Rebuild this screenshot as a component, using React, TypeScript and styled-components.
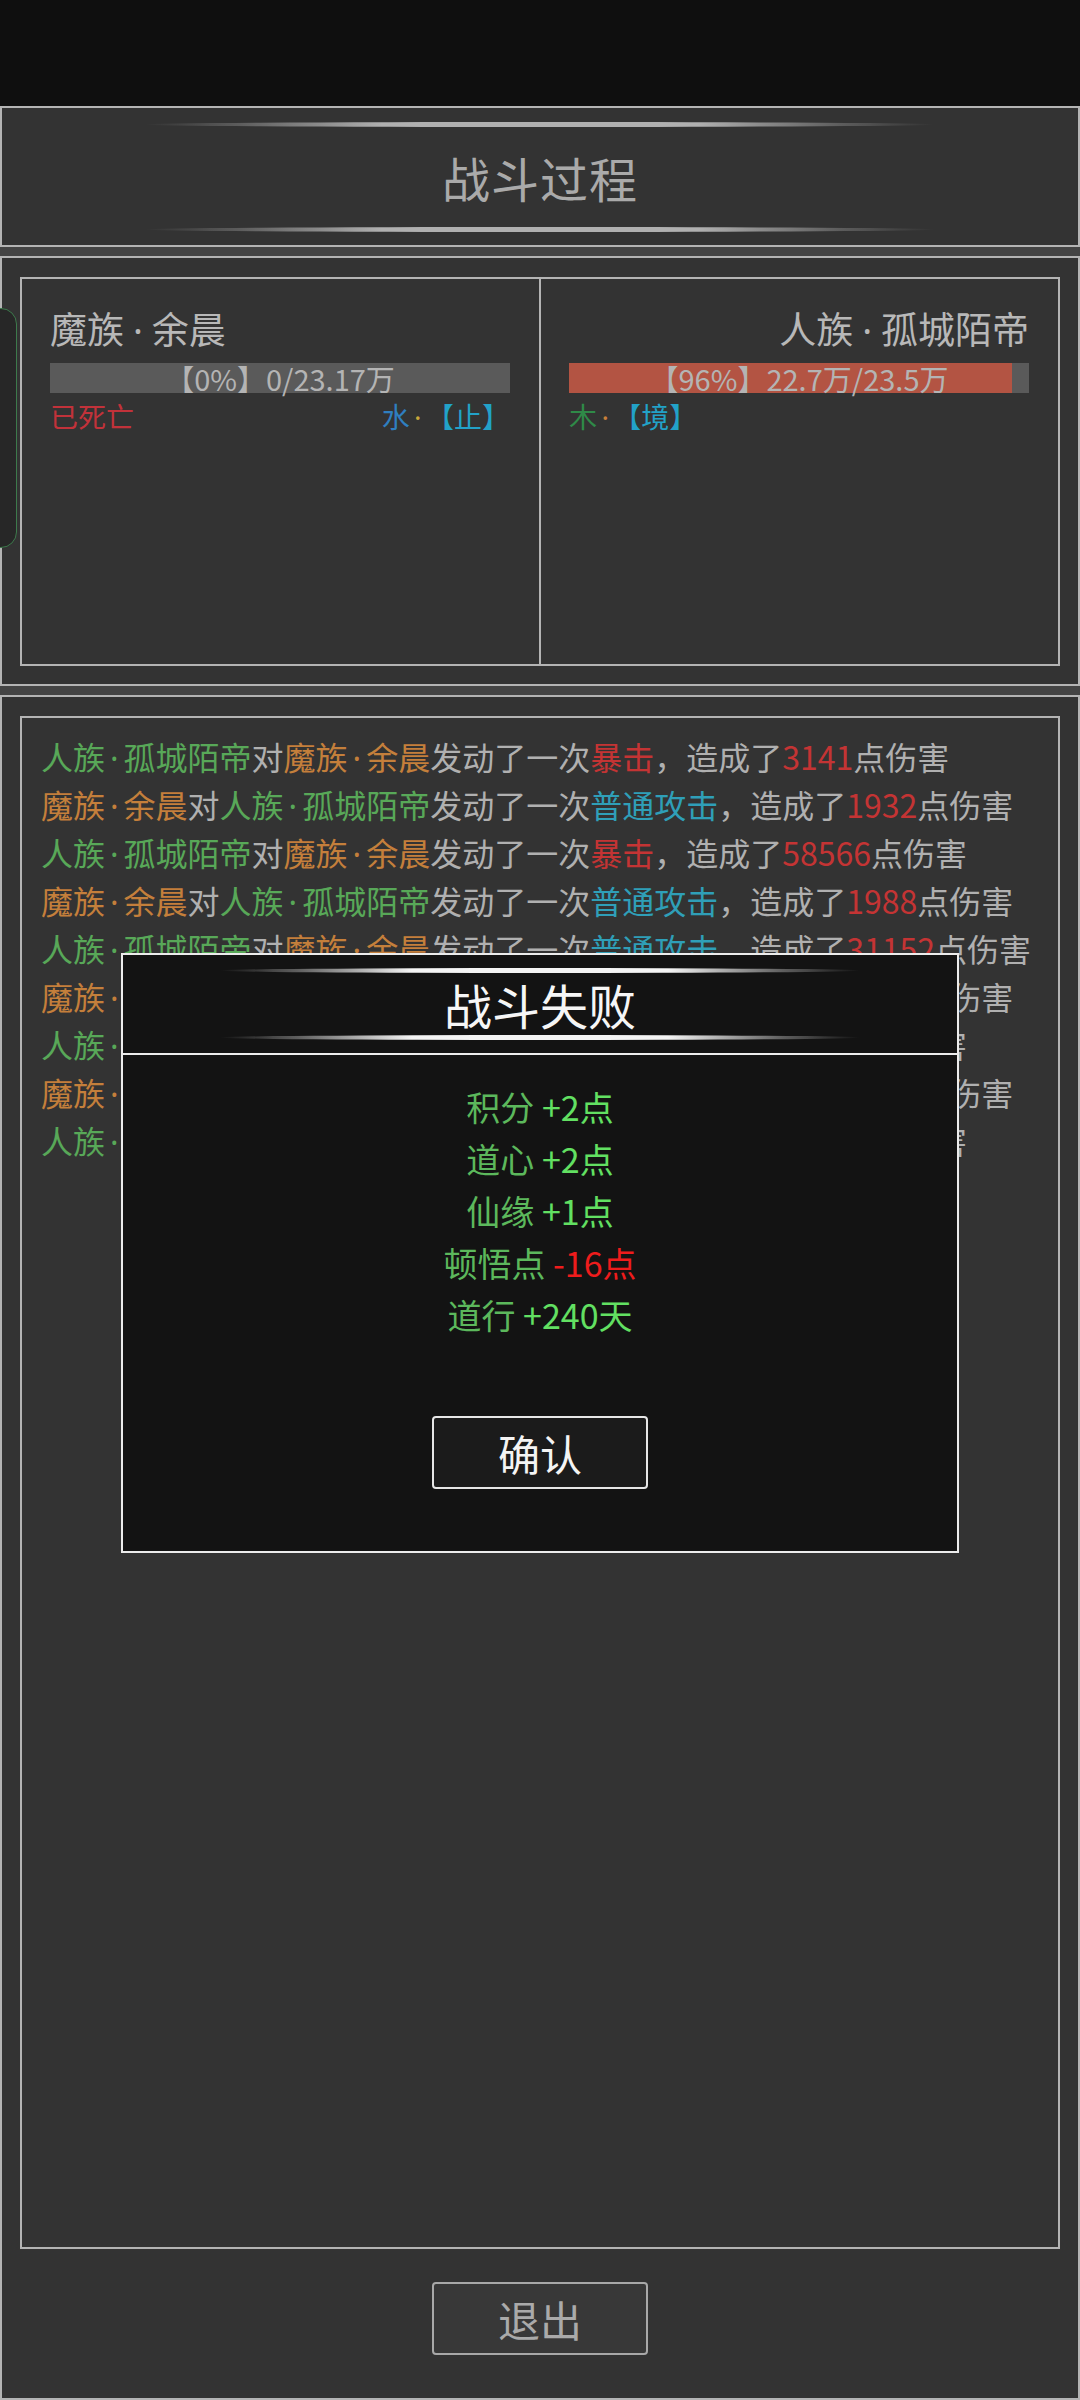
import React from "react";
import styled, { createGlobalStyle } from "styled-components";

const GlobalStyle = createGlobalStyle`
  html, body { margin: 0; padding: 0; background: #0f0f0f; }
  body { font-family: "Noto Sans CJK SC", "Noto Sans", sans-serif; }
  * { box-sizing: border-box; }
`;

const Page = styled.div`
  position: relative;
  width: 1080px;
  height: 2400px;
  display: flex;
  flex-direction: column;
  background: #444;
  gap: 9px;
  overflow: hidden;
`;

const TopBar = styled.div`
  height: 106px;
  flex: none;
  background: #0f0f0f;
  margin-bottom: -9px;
`;

const Panel = styled.section<{ $grow?: boolean }>`
  background: #333;
  border: 2px solid #b4b4b4;
  flex: ${(p) => (p.$grow ? "1 1 auto" : "none")};
  display: flex;
  flex-direction: column;
`;

const TitlePanel = styled(Panel)`
  height: 141px;
  align-items: center;
  justify-content: center;
`;

const Ornament = styled.div<{ $color: string; $width: number }>`
  width: ${(p) => p.$width}px;
  height: 5px;
  border-radius: 50%;
  background: linear-gradient(
    90deg,
    transparent 0%,
    ${(p) => p.$color}55 12%,
    ${(p) => p.$color} 30%,
    ${(p) => p.$color} 70%,
    ${(p) => p.$color}55 88%,
    transparent 100%
  );
`;

const Title = styled.h1`
  margin: 0;
  font-size: 48px;
  font-weight: 400;
  line-height: 100px;
  color: #aaa;
  letter-spacing: 1px;
`;

const FightersPanel = styled(Panel)`
  height: 430px;
  padding: 19px 18px 18px 18px;
`;

const FighterBox = styled.div`
  flex: 1;
  border: 2px solid #b4b4b4;
  display: flex;
`;

const FighterCard = styled.div<{ $right?: boolean }>`
  flex: 1;
  padding: 24px 0 0 28px;
  display: flex;
  flex-direction: column;
  ${(p) => (p.$right ? "border-left: 2px solid #b4b4b4;" : "")}
`;

const CardInner = styled.div<{ $right?: boolean }>`
  width: 460px;
  display: flex;
  flex-direction: column;
  align-items: ${(p) => (p.$right ? "flex-end" : "flex-start")};
`;

const FighterName = styled.div`
  font-size: 37px;
  line-height: 50px;
  color: #b8b8b8;
`;

const HpBar = styled.div`
  position: relative;
  margin-top: 10px;
  width: 460px;
  height: 30px;
  background: #5a5a5a;
`;

const HpFill = styled.div`
  position: absolute;
  left: 0;
  top: 0;
  bottom: 0;
  background: #b35443;
`;

const HpText = styled.div`
  position: relative;
  text-align: center;
  font-size: 29px;
  line-height: 30px;
  color: #b4b4b4;
`;

const StatusRow = styled.div`
  width: 460px;
  margin-top: 5px;
  display: flex;
  justify-content: space-between;
  font-size: 28px;
  line-height: 36px;
`;

const C = styled.span<{ $c: string }>`
  color: ${(p) => p.$c};
`;

const Dot = styled.span<{ $w?: number }>`
  display: inline-block;
  width: ${(p) => p.$w ?? 0.58}em;
  line-height: 1;
  text-align: center;
  font-family: "Noto Sans", "DejaVu Sans", sans-serif;
`;

const SideTab = styled.div`
  position: absolute;
  left: -20px;
  top: 308px;
  width: 37px;
  height: 240px;
  border: 1.5px solid #3d7a4c;
  border-radius: 16px;
  background: #272727;
`;

const LogPanel = styled(Panel)`
  padding: 19px 18px 0 18px;
  align-items: center;
`;

const LogBox = styled.div`
  align-self: stretch;
  height: 1533px;
  border: 2px solid #b4b4b4;
  padding: 14px 10px 0 19px;
`;

const LogLine = styled.div`
  font-size: 32px;
  line-height: 48px;
  height: 48px;
  color: #b0b0b0;
  white-space: nowrap;
`;

const Button = styled.button<{ $dark?: boolean }>`
  width: 216px;
  height: 73px;
  border-radius: 4px;
  border: 2px solid ${(p) => (p.$dark ? "#e6e6e6" : "#a8a8a8")};
  background: ${(p) => (p.$dark ? "#1b1b1b" : "#383838")};
  color: ${(p) => (p.$dark ? "#f4f4f4" : "#aaa")};
  font-family: inherit;
  font-size: 42px;
  padding: 0;
  display: flex;
  align-items: center;
  justify-content: center;
`;

const ExitButton = styled(Button)`
  margin-top: 33px;
`;

const Modal = styled.div`
  position: absolute;
  left: 121px;
  top: 953px;
  width: 838px;
  height: 600px;
  background: #131313;
  border: 2px solid #ececec;
  display: flex;
  flex-direction: column;
  align-items: center;
`;

const ModalHeader = styled.div`
  align-self: stretch;
  height: 100px;
  border-bottom: 2px solid #ececec;
  display: flex;
  flex-direction: column;
  align-items: center;
  justify-content: center;
`;

const ModalTitle = styled.div`
  font-size: 48px;
  line-height: 62px;
  color: #f6f6f6;
`;

const Rewards = styled.div`
  margin-top: 26px;
  display: flex;
  flex-direction: column;
  align-items: center;
`;

const Reward = styled.div`
  font-size: 34px;
  line-height: 52px;
  color: #5cb85c;
  white-space: pre;
`;

const ConfirmButton = styled(Button)`
  margin-top: 75px;
`;

function Dotted({ text, w }: { text: string; w?: number }) {
  const parts = text.split("·");
  return (
    <>
      {parts.map((p, i) => (
        <React.Fragment key={i}>
          {i > 0 && <Dot $w={w}>·</Dot>}
          {p}
        </React.Fragment>
      ))}
    </>
  );
}

type Seg = [string, string];
const G = "#58a858";
const O = "#c47f3b";
const W = "#b0b0b0";
const R = "#c43434";
const B = "#2f9fb8";

const human = "人族·孤城陌帝";
const demon = "魔族·余晨";

const humanAttack = (skill: string, dmg: string): Seg[] => [
  [human, G],
  ["对", W],
  [demon, O],
  ["发动了一次", W],
  [skill, skill === "暴击" ? R : B],
  ["，造成了", W],
  [dmg, R],
  ["点伤害", W],
];

const demonAttack = (dmg: string): Seg[] => [
  [demon, O],
  ["对", W],
  [human, G],
  ["发动了一次", W],
  ["普通攻击", B],
  ["，造成了", W],
  [dmg, R],
  ["点伤害", W],
];

const logs: Seg[][] = [
  humanAttack("暴击", "3141"),
  demonAttack("1932"),
  humanAttack("暴击", "58566"),
  demonAttack("1988"),
  humanAttack("普通攻击", "31152"),
  demonAttack("1874"),
  humanAttack("暴击", "41152"),
  demonAttack("2036"),
  humanAttack("暴击", "41211"),
];

export default function App() {
  return (
    <>
      <GlobalStyle />
      <Page>
        <TopBar />
        <TitlePanel>
          <Ornament $color="#b0b0b0" $width={790} />
          <Title>战斗过程</Title>
          <Ornament $color="#b0b0b0" $width={790} />
        </TitlePanel>
        <FightersPanel>
          <FighterBox>
            <FighterCard>
              <CardInner>
                <FighterName>
                  <Dotted text="魔族·余晨" w={0.75} />
                </FighterName>
                <HpBar>
                  <HpText>【0%】0/23.17万</HpText>
                </HpBar>
                <StatusRow>
                  <C $c="#c2323a">已死亡</C>
                  <span>
                    <C $c="#2f7fc0">水</C>
                    <C $c="#c8a83a">
                      <Dot>·</Dot>
                    </C>
                    <C $c="#22a2c8">【止】</C>
                  </span>
                </StatusRow>
              </CardInner>
            </FighterCard>
            <FighterCard $right>
              <CardInner $right>
                <FighterName>
                  <Dotted text="人族·孤城陌帝" w={0.75} />
                </FighterName>
                <HpBar>
                  <HpFill style={{ width: "96.3%" }} />
                  <HpText>【96%】22.7万/23.5万</HpText>
                </HpBar>
                <StatusRow>
                  <span>
                    <C $c="#2f8a48">木</C>
                    <C $c="#c8803a">
                      <Dot>·</Dot>
                    </C>
                    <C $c="#22a2c8">【境】</C>
                  </span>
                </StatusRow>
              </CardInner>
            </FighterCard>
          </FighterBox>
        </FightersPanel>
        <LogPanel $grow>
          <LogBox>
            {logs.map((line, i) => (
              <LogLine key={i}>
                {line.map(([t, c], j) => (
                  <C key={j} $c={c}>
                    <Dotted text={t} />
                  </C>
                ))}
              </LogLine>
            ))}
          </LogBox>
          <ExitButton>退出</ExitButton>
        </LogPanel>
        <SideTab />
        <Modal>
          <ModalHeader>
            <Ornament $color="#f4f4f4" $width={640} />
            <ModalTitle>战斗失败</ModalTitle>
            <Ornament $color="#f4f4f4" $width={640} />
          </ModalHeader>
          <Rewards>
            <Reward>
              积分 <C $c="#62e062">+2点</C>
            </Reward>
            <Reward>
              道心 <C $c="#62e062">+2点</C>
            </Reward>
            <Reward>
              仙缘 <C $c="#62e062">+1点</C>
            </Reward>
            <Reward>
              顿悟点 <C $c="#ee1c1c">-16点</C>
            </Reward>
            <Reward>
              道行 <C $c="#62e062">+240天</C>
            </Reward>
          </Rewards>
          <ConfirmButton $dark>确认</ConfirmButton>
        </Modal>
      </Page>
    </>
  );
}
